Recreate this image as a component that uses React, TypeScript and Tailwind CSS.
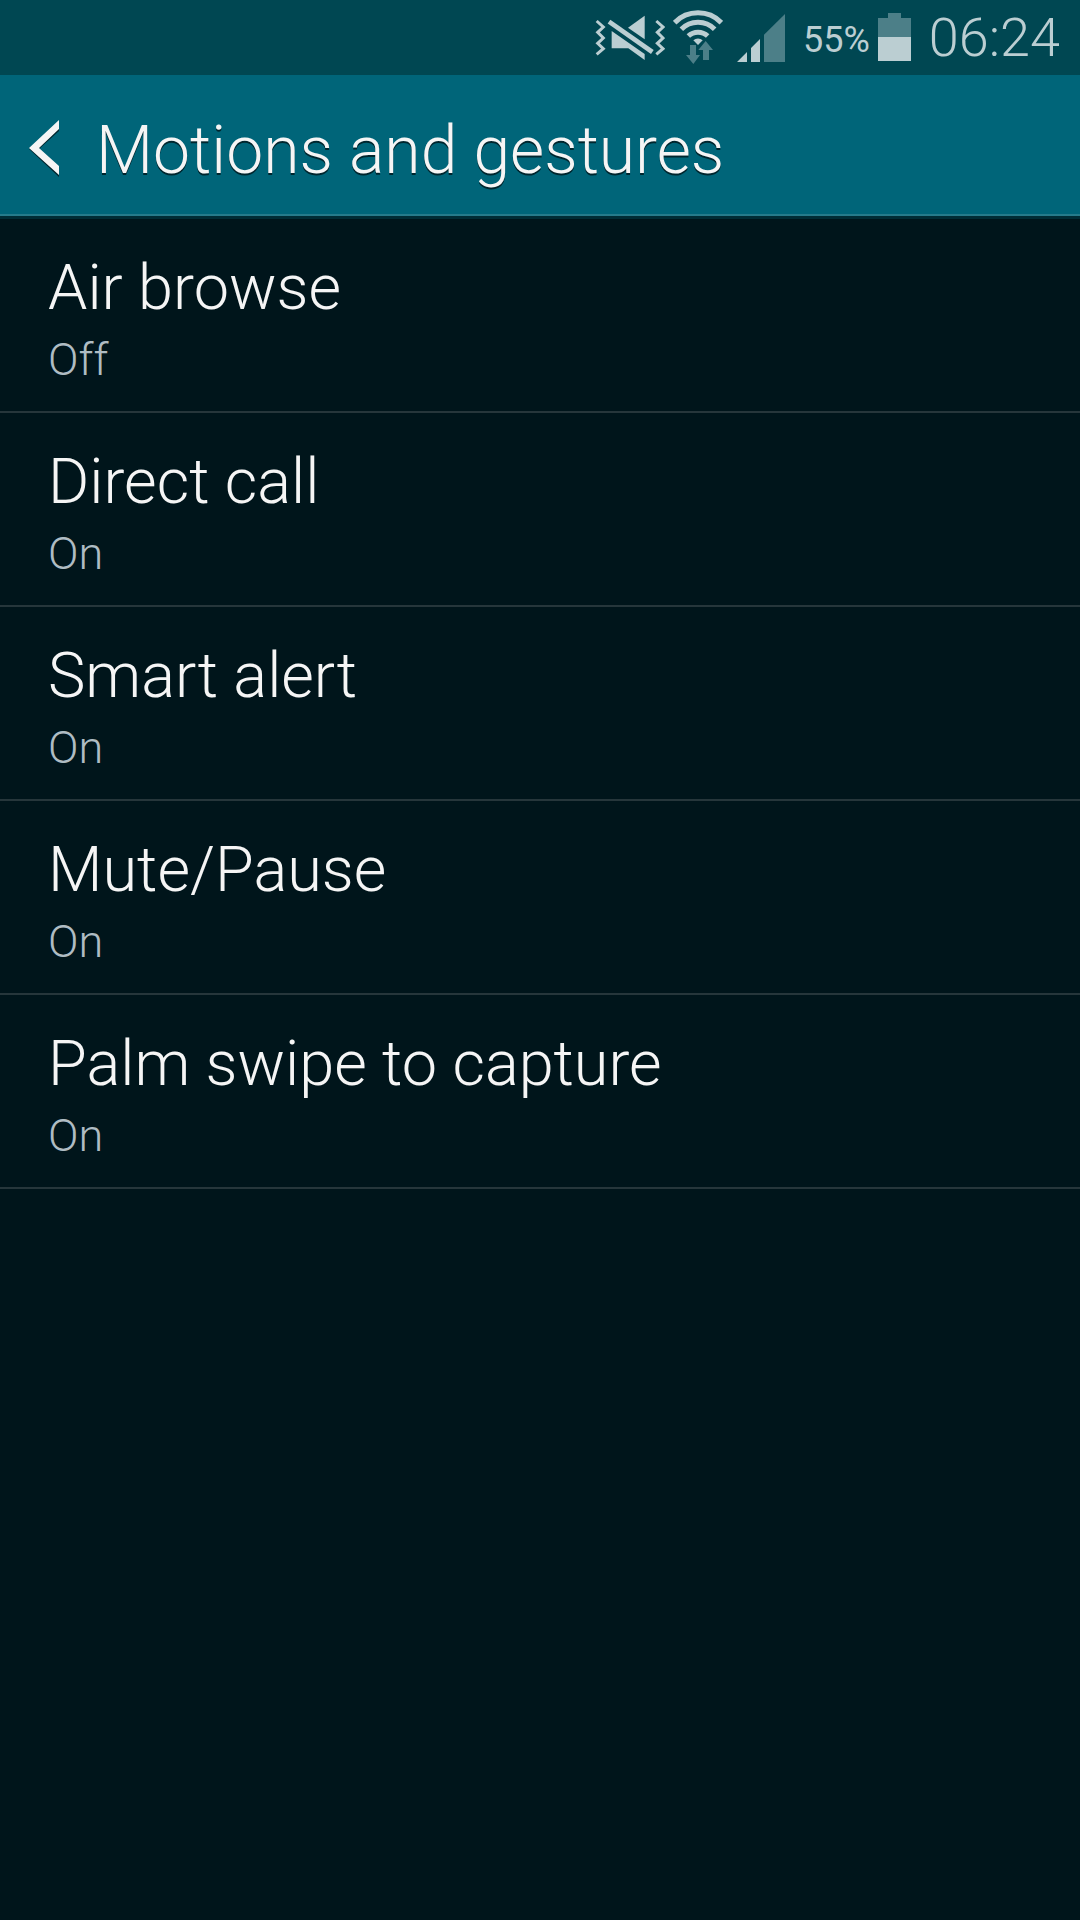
interface Setting {
  id: string;
  title: string;
  state: 'On' | 'Off';
}

const settings: Setting[] = [
  { id: 'air-browse', title: 'Air browse', state: 'Off' },
  { id: 'direct-call', title: 'Direct call', state: 'On' },
  { id: 'smart-alert', title: 'Smart alert', state: 'On' },
  { id: 'mute-pause', title: 'Mute/Pause', state: 'On' },
  { id: 'palm-swipe', title: 'Palm swipe to capture', state: 'On' },
];

function MutedIcon() {
  return (
    <svg viewBox="42 0 210 225" className="w-[70px] h-[75px]" fill="#bbced2" role="img" aria-label="Muted">
      <g fill="none" stroke="#bbced2" strokeWidth="9">
        <path d="M47 63 67 81 50 97 67 114 50 130 67 146 47 163" />
        <path d="M226 63 246 81 229 97 246 114 229 130 246 146 226 163" />
        <path d="M84 65 214 156" strokeWidth="14" />
      </g>
      <path d="M191 47V118L141 83Z" />
      <path d="M92 93 191 162V180L142 145H92Z" />
    </svg>
  );
}

function WifiIcon() {
  return (
    <svg viewBox="279 0 150 225" className="w-[50px] h-[75px]" role="img" aria-label="Wi-Fi">
      <g fill="none" stroke="#bbced2" strokeWidth="15">
        <path d="M284 68A98 98 0 0 1 424 68" />
        <path d="M304 88A70 70 0 0 1 404 88" />
        <path d="M325 108A42 42 0 0 1 383 108" />
      </g>
      <path d="M340 121A20 20 0 0 1 368 121L354 135Z" fill="#bbced2" />
      {/* Upload / download arrows */}
      <path d="M330 135H348V165H360L340 192 318 165H330Z" fill="#4c7f88" />
      <path d="M377 123 399 150H387V180H369V150H355Z" fill="#4c7f88" />
    </svg>
  );
}

function SignalIcon() {
  return (
    <svg viewBox="471 0 144 225" className="w-12 h-[75px]" role="img" aria-label="Signal strength">
      <path d="M471 186 501 156V186ZM513 186V144L540 117V186Z" fill="#bbced2" />
      <path d="M552 186V104L615 42V186Z" fill="#4c7f88" />
    </svg>
  );
}

function BatteryIcon() {
  return (
    <svg viewBox="294 0 99 225" className="w-[33px] h-[75px]" role="img" aria-label="Battery">
      <path d="M324 39H363V54H393V111H294V54H324Z" fill="#4c7f88" />
      <path d="M294 111H393V183H294Z" fill="#bbced2" />
    </svg>
  );
}

function StatusBar() {
  return (
    <div className="flex h-[75px] items-center justify-end bg-[#004752] pr-5 text-[#bbced2]">
      <MutedIcon />
      <div className="ml-2">
        <WifiIcon />
      </div>
      <div className="ml-3.5">
        <SignalIcon />
      </div>
      <span className="ml-[18px] pt-1 text-4xl">55%</span>
      <div className="ml-2">
        <BatteryIcon />
      </div>
      <span className="ml-[18px] text-[54px] leading-[75px] font-light">06:24</span>
    </div>
  );
}

export default function App() {
  return (
    <div className="min-h-screen bg-[#00151b] font-['Roboto',sans-serif]">
      <StatusBar />

      <header className="border-b-3 border-[#002c35]">
        <div className="flex h-[141px] items-center border-b-2 border-[#267b8b] bg-[#006579]">
          <button type="button" aria-label="Navigate up" className="flex h-full items-center pt-1.5 pl-7 pr-9">
            <svg viewBox="0 0 32 60" className="h-[60px] w-8">
              <path d="M31 4V13L11 31 31 50V59L1 31Z" fill="#00262e" />
              <path d="M31 2V11L11 30 31 48V57L1 30Z" fill="#f5f5f5" />
            </svg>
          </button>
          <h1 className="pt-3 text-[66px] leading-[84px] font-light text-[#f5f5f5] [text-shadow:0_2px_0_#00262e]">
            Motions and gestures
          </h1>
        </div>
      </header>

      <ul>
        {settings.map((item) => (
          <li key={item.id} className="border-b-2 border-[#26363b]">
            <button type="button" className="block w-full px-12 pt-[27px] pb-[21px] text-left font-light">
              <span className="block text-[63px] leading-[84px] text-[#f5f5f5]">{item.title}</span>
              <span className="block text-[45px] leading-[60px] text-[#afbcc3]">{item.state}</span>
            </button>
          </li>
        ))}
      </ul>
    </div>
  );
}
